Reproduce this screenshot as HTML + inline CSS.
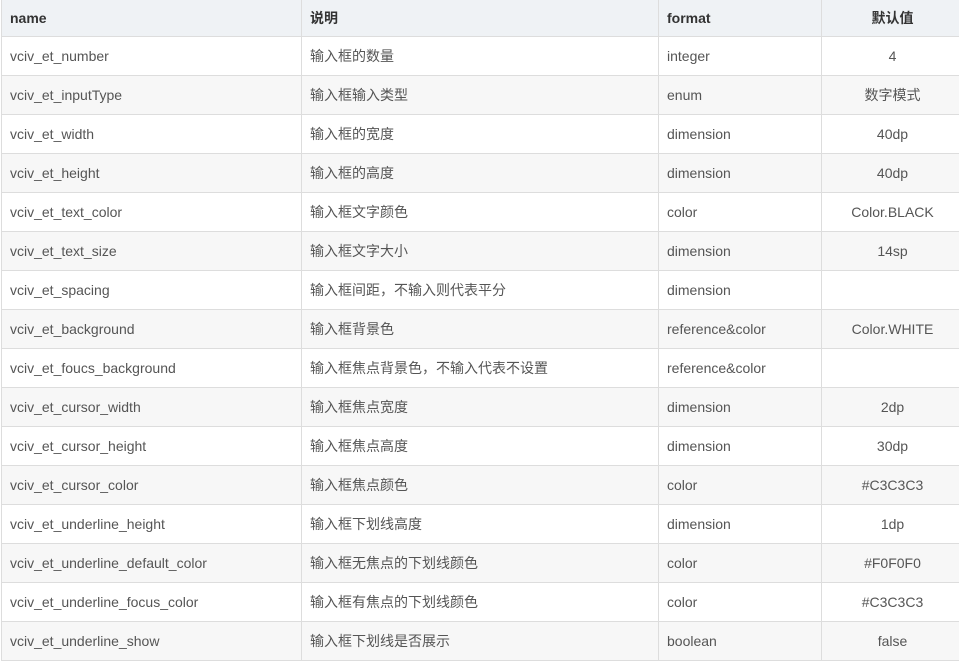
<!DOCTYPE html>
<html><head><meta charset="utf-8"><style>
body{margin:0;width:959px;height:661px;overflow:hidden;background:#fff;font-family:"Liberation Sans","Noto Sans CJK SC",sans-serif;font-size:14px;color:#555}
table{position:absolute;left:1px;top:-1px;border-collapse:collapse;table-layout:fixed;width:962px}
td,th{border:1px solid #ddd;padding:0 0 0 8px;height:38px;text-align:left;white-space:nowrap}
th{height:36px;background:#eff2f5;color:#333;font-weight:bold}
tr:nth-child(odd) td{background:#f7f7f7}
td:nth-child(4),th:nth-child(4){text-align:center;padding:0}
</style></head><body>
<table>
<colgroup><col style="width:300px"><col style="width:357px"><col style="width:163px"><col style="width:142px"></colgroup>
<tr><th>name</th><th>说明</th><th>format</th><th>默认值</th></tr>
<tr><td>vciv_et_number</td><td>输入框的数量</td><td>integer</td><td>4</td></tr>
<tr><td>vciv_et_inputType</td><td>输入框输入类型</td><td>enum</td><td>数字模式</td></tr>
<tr><td>vciv_et_width</td><td>输入框的宽度</td><td>dimension</td><td>40dp</td></tr>
<tr><td>vciv_et_height</td><td>输入框的高度</td><td>dimension</td><td>40dp</td></tr>
<tr><td>vciv_et_text_color</td><td>输入框文字颜色</td><td>color</td><td>Color.BLACK</td></tr>
<tr><td>vciv_et_text_size</td><td>输入框文字大小</td><td>dimension</td><td>14sp</td></tr>
<tr><td>vciv_et_spacing</td><td>输入框间距，不输入则代表平分</td><td>dimension</td><td></td></tr>
<tr><td>vciv_et_background</td><td>输入框背景色</td><td>reference&amp;color</td><td>Color.WHITE</td></tr>
<tr><td>vciv_et_foucs_background</td><td>输入框焦点背景色，不输入代表不设置</td><td>reference&amp;color</td><td></td></tr>
<tr><td>vciv_et_cursor_width</td><td>输入框焦点宽度</td><td>dimension</td><td>2dp</td></tr>
<tr><td>vciv_et_cursor_height</td><td>输入框焦点高度</td><td>dimension</td><td>30dp</td></tr>
<tr><td>vciv_et_cursor_color</td><td>输入框焦点颜色</td><td>color</td><td>#C3C3C3</td></tr>
<tr><td>vciv_et_underline_height</td><td>输入框下划线高度</td><td>dimension</td><td>1dp</td></tr>
<tr><td>vciv_et_underline_default_color</td><td>输入框无焦点的下划线颜色</td><td>color</td><td>#F0F0F0</td></tr>
<tr><td>vciv_et_underline_focus_color</td><td>输入框有焦点的下划线颜色</td><td>color</td><td>#C3C3C3</td></tr>
<tr><td>vciv_et_underline_show</td><td>输入框下划线是否展示</td><td>boolean</td><td>false</td></tr>
</table>
</body></html>
